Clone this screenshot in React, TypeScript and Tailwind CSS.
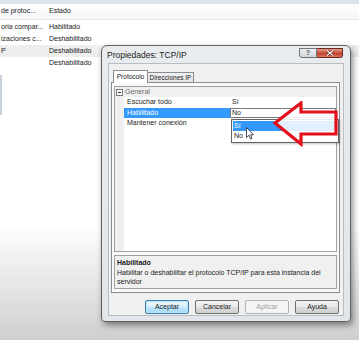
import React from "react";

function BgRow({ a, b, sel }: { a: string; b: string; sel?: boolean }) {
  return (
    <div className={`flex h-[12px] items-center ${sel ? "bg-[#eeeeee]" : ""}`}>
      <span className="w-[49px] pl-[1px] whitespace-nowrap overflow-hidden">{a}</span>
      <span className="whitespace-nowrap">{b}</span>
    </div>
  );
}

function Btn({ label, def, dis }: { label: string; def?: boolean; dis?: boolean }) {
  return (
    <div
      className={`flex h-[14px] w-[44px] items-center justify-center rounded-[2px] border text-[7px] ${
        def
          ? "border-[#3c7fb1] bg-[linear-gradient(to_bottom,#eaf6fd,#d9f0fc_50%,#bee6fd_51%,#a7d9f5)] text-[#1a1a1a] shadow-[0_0_0_1px_#bfe3f7_inset]"
          : dis
          ? "border-[#adb2b5] bg-[#f4f4f4] text-[#a3a3a3]"
          : "border-[#707070] bg-[linear-gradient(to_bottom,#f2f2f2,#ebebeb_50%,#dddddd_51%,#cfcfcf)] text-[#1a1a1a]"
      }`}
    >
      {label}
    </div>
  );
}

export default function App() {
  return (
    <div className="relative h-[340px] w-[359px] overflow-hidden bg-[linear-gradient(to_bottom,#ffffff_0%,#ffffff_66%,#cfcfcf_100%)] font-['Liberation_Sans',Arial,sans-serif] text-[7px] text-[#1a1a1a]">
      {/* background window */}
      <div className="h-[4px] bg-[#dbe2ea]" />
      <div className="flex h-[16px] items-center border-b border-[#e6e6e6] bg-[linear-gradient(to_bottom,#ffffff,#f5f6f7)]">
        <span className="w-[49px] pl-[1px] whitespace-nowrap">de protoc...</span>
        <span>Estado</span>
      </div>
      <div className="pt-[1px]">
        <BgRow a="oria compar..." b="Habilitado" />
        <BgRow a="izaciones c..." b="Deshabilitado" />
        <BgRow a="P" b="Deshabilitado" sel />
        <BgRow a="" b="Deshabilitado" />
      </div>
      <div className="ml-0 mt-[6px] h-[40px] w-[2px] bg-[#c9d3de]" />

      {/* dialog window */}
      <div className="absolute left-[101px] top-[45px] flex h-[277px] w-[250px] flex-col rounded-t-[6px] rounded-b-[4px] border border-[#5f6366] bg-[linear-gradient(to_bottom,#e9ecef,#e2e5e9)] shadow-[2px_3px_6px_rgba(0,0,0,0.45)]">
        {/* title bar */}
        <div className="relative flex h-[17px] items-center pl-[5px] pt-[2px]">
          <span className="text-[8.5px] text-[#1b1b1b]">Propiedades: TCP/IP</span>
          <div className="absolute right-[7px] top-[2px] flex h-[10px]">
            <div className="flex w-[18px] items-center justify-center rounded-bl-[3px] border border-[#6e7378] bg-[linear-gradient(to_bottom,#f0f2f4,#cfd4da)] text-[7px] font-bold text-[#555]">
              ?
            </div>
            <div className="flex w-[26px] items-center justify-center rounded-br-[3px] border border-l-0 border-[#6b2a22] bg-[linear-gradient(to_bottom,#e39a8a,#c8503c_50%,#c43c2a_51%,#d9765f)]">
              <svg width="8" height="6" viewBox="0 0 8 6">
                <path d="M1 0.5L7 5.5M7 0.5L1 5.5" stroke="#5a1a12" strokeWidth="2.4" />
                <path d="M1 0.5L7 5.5M7 0.5L1 5.5" stroke="#ffffff" strokeWidth="1.3" />
              </svg>
            </div>
          </div>
        </div>
        {/* client area */}
        <div className="mx-[6px] flex h-[253px] flex-col border border-[#b9bdc2] bg-[#f0f0f0] px-[2px]">
          {/* tabs */}
          <div className="mt-[6px] flex h-[13px] items-end pl-[2px]">
            <div className="relative z-10 flex h-[13px] w-[35px] items-center justify-center whitespace-nowrap border border-b-0 border-[#898c95] bg-white text-[6.5px]">
              Protocolo
            </div>
            <div className="flex h-[11px] w-[46px] items-center justify-center whitespace-nowrap border border-b-0 border-l-0 border-[#898c95] bg-[linear-gradient(to_bottom,#f2f2f2,#e3e3e3)] text-[6.5px]">
              Direcciones IP
            </div>
          </div>
          {/* tab panel */}
          <div className="mr-[1px] -mt-[1px] flex h-[211px] flex-col border border-[#898c95] bg-[#f9f9f9] p-[2px] pt-[3px]">
            {/* property grid */}
            <div className="relative flex h-[166px] flex-col border border-[#a0a0a0] bg-white">
              <div className="flex h-[10px] items-center bg-[#f0f0f0]">
                <div className="ml-[1px] flex h-[7px] w-[7px] items-center justify-center border border-[#7a7a7a] bg-white">
                  <div className="h-[1px] w-[3px] bg-[#333]" />
                </div>
                <span className="ml-[2px] text-[#6b6b6b]">General</span>
              </div>
              <div className="flex flex-1">
                <div className="w-[9px] bg-[#f0f0f0]" />
                <div className="flex flex-1 flex-col">
                  <div className="flex h-[10.5px] items-center">
                    <span className="w-[106px] pl-[3px]">Escuchar todo</span>
                    <span className="pl-[2px]">Sí</span>
                  </div>
                  <div className="flex h-[10.5px] items-center">
                    <span className="flex h-full w-[106px] items-center bg-[#3399ff] pl-[3px] text-white">Habilitado</span>
                    <div className="flex h-full flex-1 items-center justify-between border border-[#7a7a7a] bg-white pl-[1px] pr-[3px]">
                      <span>No</span>
                      <svg width="5" height="3" viewBox="0 0 5 3">
                        <path d="M0 0H5L2.5 3Z" fill="#111" />
                      </svg>
                    </div>
                  </div>
                  <div className="flex h-[10.5px] items-center">
                    <span className="w-[106px] pl-[3px]">Mantener conexión</span>
                  </div>
                </div>
              </div>
              {/* dropdown list */}
              <div className="absolute left-[116px] top-[32px] flex w-[108px] flex-col border border-[#646464] bg-white p-[1px] shadow-[1px_1px_2px_rgba(0,0,0,0.25)]">
                <div className="flex h-[10px] items-center bg-[#3399ff] pl-[1px] text-white">Sí</div>
                <div className="flex h-[10px] items-center pl-[1px]">No</div>
              </div>
              {/* cursor */}
              <svg className="absolute left-[131px] top-[40px]" width="8" height="13" viewBox="0 0 8 13">
                <path d="M0.5 0.5V10.5L3 8.3L4.6 12L6 11.4L4.5 7.8H7.5Z" fill="#fff" stroke="#222" strokeWidth="0.8" />
              </svg>
              {/* red arrow */}
              <svg className="absolute left-[157px] top-[14px]" width="68" height="46" viewBox="0 0 68 46">
                <path
                  d="M3 22L29 2V11H64V33H29V43Z"
                  fill="#ffffff"
                  fillOpacity="0.85"
                  stroke="#e3101c"
                  strokeWidth="3.2"
                  strokeLinejoin="miter"
                />
              </svg>
            </div>
            {/* description */}
            <div className="mt-[3px] flex h-[34px] flex-col border border-[#a0a0a0] bg-[#f0f0f0] px-[2px] pt-[2px] leading-[9.5px]">
              <span className="font-bold">Habilitado</span>
              <span className="pr-[6px]">Habilitar o deshabilitar el protocolo TCP/IP para esta instancia del servidor</span>
            </div>
          </div>
          {/* buttons */}
          <div className="mt-[7px] flex justify-end gap-[6px] pr-[2px]">
            <Btn label="Aceptar" def />
            <Btn label="Cancelar" />
            <Btn label="Aplicar" dis />
            <Btn label="Ayuda" />
          </div>
        </div>
      </div>
    </div>
  );
}
